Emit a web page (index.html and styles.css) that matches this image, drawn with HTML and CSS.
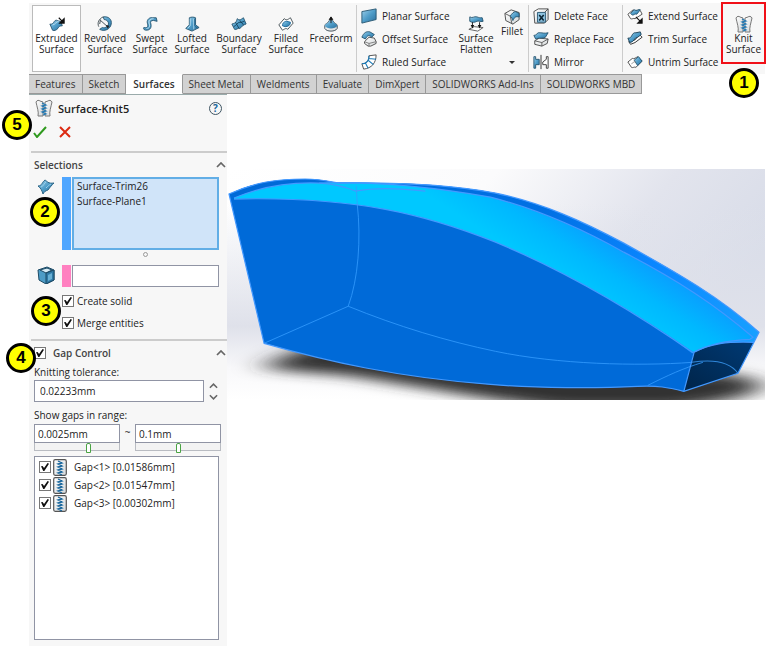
FILE: index.html
```html
<!DOCTYPE html>
<html lang="en">
<head>
<meta charset="utf-8">
<title>Surface-Knit5</title>
<link rel="stylesheet" href="styles.css">
</head>
<body>
<svg class="sprite" aria-hidden="true">
  <defs>
    <linearGradient id="steel" x1="0" y1="0" x2="1" y2="1"><stop offset="0" stop-color="#9fd0ea"/><stop offset=".5" stop-color="#4e9cc8"/><stop offset="1" stop-color="#2c6f9c"/></linearGradient>
    <linearGradient id="pale" x1="0" y1="0" x2="1" y2="1"><stop offset="0" stop-color="#ffffff"/><stop offset="1" stop-color="#d4d8da"/></linearGradient>
  </defs>
  <symbol id="extrude" viewBox="0 0 18 18"><path d="M1 9c3 1 4-2 6-4 2-1 3 1 6 1l2 5c-3 0-4 1-5 3-2 2-4 3-6 2z" fill="url(#steel)" stroke="#24536f"/><path d="M4 10c3 0 4-4 7-4" stroke="#bfe2f2" fill="none"/><path d="M11 2l4 4M17 3v5h-5z" stroke="#111" stroke-width="1.3" fill="#111"/></symbol>
  <symbol id="revolve" viewBox="0 0 18 18"><path d="M7 1c6-1 10 3 9 8-1 6-8 9-13 6l3-2c3 1 6-1 7-4 0-3-2-5-5-5z" fill="url(#steel)" stroke="#24536f"/><path d="M7 1C2 3 0 8 2 12M4 5l9 8M3 9l1-5" fill="none" stroke="#49545a" stroke-width="1.1"/><path d="M12 14l-2-4 4 1z" fill="#222"/></symbol>
  <symbol id="sweep" viewBox="0 0 18 18"><path d="M2 13c5 1 5-2 4-5C5 4 9 1 12 2h4l1 4-4-1c-3 0-4 1-3 4 1 4-1 7-5 7-2 0-4-1-3-3z" fill="url(#steel)" stroke="#24536f"/><path d="M5 14c4 0 4-3 3-6s2-5 5-5" fill="none" stroke="#c5e5f4"/></symbol>
  <symbol id="loft" viewBox="0 0 18 18"><path d="M6 2c2-1 5-1 7 0v8l4 3-8 4-7-3 4-4z" fill="url(#steel)" stroke="#24536f"/><path d="M7 3v8l-3 3M11 3v12" stroke="#b7ddef" fill="none"/><path d="M12 3v8l3 3" stroke="#23658d" fill="none"/></symbol>
  <symbol id="boundary" viewBox="0 0 18 18"><path d="M1 9c3-1 5-1 6-6 3 3 5 0 7-1l3 7c-3 1-4 2-7 5-2-1-4 2-6 1z" fill="url(#steel)" stroke="#24536f"/><path d="M5 7l4 7M10 5l4 5M3 12c3-1 4-5 7-5 2 1 3-1 5-1" stroke="#123f59" fill="none"/></symbol>
  <symbol id="filled" viewBox="0 0 18 18"><path d="M1 10l6-7c3 3 5 0 7-1l3 6-6 7c-2-2-4 0-6 1z" fill="#fff" stroke="#39454b"/><path d="M5 11c0-4 3-5 5-5l4 1c0 3-2 5-6 5z" fill="url(#steel)" stroke="#17669a"/></symbol>
  <symbol id="freeform" viewBox="0 0 18 18"><path d="M2 11c0-3 4-2 5-6h4c1 4 5 3 5 6v3c-2 4-12 4-14 0z" fill="url(#pale)" stroke="#38474f"/><path d="M2 11c0-3 4-2 5-6h4c1 4 5 3 5 6-2 4-12 4-14 0z" fill="url(#steel)"/><path d="M9 8V2M7 4l2-3 2 3z" fill="#111" stroke="#111"/></symbol>
  <symbol id="planar" viewBox="0 0 18 18"><path d="M1 4l16-3v12L1 17z" fill="url(#steel)" stroke="#24536f"/></symbol>
  <symbol id="offset" viewBox="0 0 18 18"><path d="M4 12l5-5 6 1 2 4v2l-6 3H8l-4-3z" fill="url(#pale)" stroke="#444"/><path d="M4 12l5 2 8-2M9 14v3" fill="none" stroke="#777"/><path d="M1 7c2-5 5-7 9-6l5 3-3 3C9 4 7 5 5 9z" fill="url(#steel)" stroke="#24536f"/></symbol>
  <symbol id="ruled" viewBox="0 0 18 18"><path d="M1 11c5 0 8-3 8-9l8-1c0 9-5 15-14 16z" fill="#fff" stroke="#444"/><path d="M1 11c5 0 8-3 8-9M5 10l3 6M8 7l6 5M9 5l8 1" stroke="#1b7ab7" fill="none" stroke-width="1.2"/></symbol>
  <symbol id="flatten" viewBox="0 0 18 18"><path d="M1 15l6-3 10 1-6 4z" fill="#fff" stroke="#555"/><path d="M2 1c3 2 5-1 8 0s3 1 6 1l1 4c-4 1-5-1-7 0s-5 2-8 0z" fill="url(#steel)" stroke="#24536f"/><path d="M5 7v5M13 7v5" stroke="#111"/><path d="M3 10h4l-2 4zM11 10h4l-2 4z" fill="#111"/></symbol>
  <symbol id="fillet" viewBox="0 0 18 18"><path d="M1 5l7-4 9 3v8l-7 5-8-4z" fill="url(#pale)" stroke="#444"/><path d="M1 5l6 3 2 9" fill="none" stroke="#555"/><path d="M7 8c2-3 4-5 6-5l4 2v4c-4-1-5 0-7 4-1-2-1-4-3-5z" fill="url(#steel)" stroke="#24536f"/></symbol>
  <symbol id="delete" viewBox="0 0 18 18"><path d="M1 4l5-3h11v12l-4 4H2z" fill="url(#pale)" stroke="#444"/><path d="M13 5l4-4" stroke="#444"/><path d="M5 5h9v11H5z" fill="#8fc4e1" stroke="#24536f"/><path d="M7 8l5 6M12 8l-5 6" stroke="#0c2534" stroke-width="1.8"/></symbol>
  <symbol id="replace" viewBox="0 0 18 18"><path d="M2 11l5-3 10 1-1 5-6 3-8-2z" fill="url(#pale)" stroke="#444"/><path d="M2 11l8 2 7-4M10 13v4" fill="none" stroke="#555"/><path d="M1 5c4 0 3-4 7-3 3 0 5 1 9 0l-3 5c-3 2-6 0-11 2z" fill="url(#steel)" stroke="#24536f"/></symbol>
  <symbol id="mirror" viewBox="0 0 18 18"><path d="M1 3h2v3h4v6H3v4H1z" fill="url(#steel)" stroke="#24536f"/><path d="M9 1v16" stroke="#222"/><path d="M17 3h-2v3l-4 3v3h4v4h2z" fill="#fff" stroke="#333"/></symbol>
  <symbol id="extend" viewBox="0 0 18 18"><path d="M1 7l6-5c3 3 5-1 8 1l2 4-8 5c-2-1-3 1-5 0z" fill="#fff" stroke="#444"/><path d="M4 6l4-4c3 2 5-1 7 0l-4 5c-2-1-3 1-5 1z" fill="url(#steel)" stroke="#24536f"/><path d="M10 10l5 5M17 12v5h-5z" fill="#111" stroke="#111" stroke-width="1.2"/></symbol>
  <symbol id="trim" viewBox="0 0 18 18"><path d="M2 12l2 3 5-2 8-6-3-3-5 6z" fill="#fff" stroke="#222"/><path d="M1 8c5 1 4-7 9-6l5-1 1 3-4 3c-4 0-4 6-9 6z" fill="url(#steel)" stroke="#183d54"/></symbol>
  <symbol id="untrim" viewBox="0 0 18 18"><path d="M1 9l5-4c2 1 4-1 6-2l5 5-7 7c-2-1-3 1-5 0z" fill="#fff" stroke="#444"/><path d="M8 7l5-4 4 5-5 5z" fill="url(#steel)" stroke="#24536f"/><path d="M5 11c2-1 3-3 5-2" fill="none" stroke="#888"/></symbol>
  <symbol id="knit" viewBox="0 0 18 18"><path d="M1 3c1-2 3-2 4-1l3 1v14H3c1-4-1-9-2-14z" fill="url(#pale)" stroke="#777"/><path d="M17 3c-1-2-3-2-4-1l-3 1v14h5c-1-4 1-9 2-14z" fill="url(#pale)" stroke="#777"/><path d="M7 4l4 2-4 1 4 2-4 1 4 2-4 1 4 2-3 1" fill="none" stroke="#2177b2" stroke-width="1.2"/></symbol>
  <symbol id="gap" viewBox="0 0 14 17"><rect x=".7" y=".7" width="12.6" height="15.6" rx="1.5" fill="url(#pale)" stroke="#555" stroke-width="1.2"/><path d="M5 2l4 2-4 1 4 2-4 1 4 2-4 1 4 2-4 1 4 2" fill="none" stroke="#17659c" stroke-width="1.3"/></symbol>
  <symbol id="surf" viewBox="0 0 18 16"><path d="M1 7c4 0 4-4 7-6 2 1 3 4 9 3-2 2-4 4-6 7-3 1-4 2-5 4-1-3-2-6-5-8z" fill="url(#steel)" stroke="#2d6687"/><path d="M4 8c3-1 3-4 5-5M9 9c2-2 3-3 5-4" fill="none" stroke="#9bd0ea"/></symbol>
  <symbol id="cube" viewBox="0 0 18 18"><path d="M1 4l9-3 7 3v10l-8 4-7-4z" fill="#4d9cc6" stroke="#1d4a65"/><path d="M3 4l7-2 5 2-6 3z" fill="#d7edf7" stroke="#1d4a65"/><path d="M9 7l8-3v10l-8 4z" fill="#2f7aa6" stroke="#1d4a65"/><path d="M11 9l4-2v6l-4 2z" fill="#69b1d5"/></symbol>
  <symbol id="caret" viewBox="0 0 10 6"><path d="M1 5l4-4 4 4" fill="none" stroke="#666" stroke-width="1.7"/></symbol>
</svg>

<main class="app">
  <header class="ribbon">
    <div class="tools">
      <button class="tool w-49 current"><svg><use href="#extrude"/></svg>Extruded<br>Surface</button>
      <button class="tool w-48"><svg><use href="#revolve"/></svg>Revolved<br>Surface</button>
      <button class="tool w-42"><svg><use href="#sweep"/></svg>Swept<br>Surface</button>
      <button class="tool w-42"><svg><use href="#loft"/></svg>Lofted<br>Surface</button>
      <button class="tool w-52"><svg><use href="#boundary"/></svg>Boundary<br>Surface</button>
      <button class="tool w-42"><svg><use href="#filled"/></svg>Filled<br>Surface</button>
      <button class="tool w-48"><svg><use href="#freeform"/></svg>Freeform</button>
    </div>
    <div class="group">
      <div class="stack w-94">
        <button class="row-tool"><svg><use href="#planar"/></svg>Planar Surface</button>
        <button class="row-tool"><svg><use href="#offset"/></svg>Offset Surface</button>
        <button class="row-tool"><svg><use href="#ruled"/></svg>Ruled Surface</button>
      </div>
      <button class="tool w-42"><svg><use href="#flatten"/></svg>Surface<br>Flatten</button>
      <button class="tool short w-30"><svg><use href="#fillet"/></svg>Fillet<span class="drop"></span></button>
    </div>
    <div class="group">
      <div class="stack w-88">
        <button class="row-tool"><svg><use href="#delete"/></svg>Delete Face</button>
        <button class="row-tool"><svg><use href="#replace"/></svg>Replace Face</button>
        <button class="row-tool"><svg><use href="#mirror"/></svg>Mirror</button>
      </div>
    </div>
    <div class="group">
      <div class="stack w-94">
        <button class="row-tool"><svg><use href="#extend"/></svg>Extend Surface</button>
        <button class="row-tool"><svg><use href="#trim"/></svg>Trim Surface</button>
        <button class="row-tool"><svg><use href="#untrim"/></svg>Untrim Surface</button>
      </div>
    </div>
    <div class="knit-slot">
      <button class="tool knit"><svg><use href="#knit"/></svg>Knit<br>Surface</button>
      <span class="badge b1">1</span>
    </div>
  </header>

  <nav class="tabs">
    <a href="#">Features</a><a href="#">Sketch</a><a href="#" class="active">Surfaces</a><a href="#">Sheet Metal</a><a href="#">Weldments</a><a href="#">Evaluate</a><a href="#">DimXpert</a><a href="#">SOLIDWORKS Add-Ins</a><a href="#">SOLIDWORKS MBD</a>
  </nav>

  <div class="workspace">
    <aside class="panel">
      <div class="title">
        <svg class="title-icon"><use href="#knit"/></svg>
        <h1>Surface-Knit5</h1>
        <button class="help" aria-label="Help">?</button>
      </div>
      <div class="confirm">
        <button aria-label="OK"><svg viewBox="0 0 14 12"><path d="M1 7l3 4 9-10" fill="none" stroke="#2f9a1e" stroke-width="2"/></svg></button>
        <button aria-label="Cancel"><svg viewBox="0 0 14 12"><path d="M2 1l10 10M12 1L2 11" fill="none" stroke="#dc2a12" stroke-width="2"/></svg></button>
        <span class="badge b5">5</span>
      </div>

      <section class="selections">
        <div class="head"><h2>Selections</h2><svg class="caret"><use href="#caret"/></svg></div>
        <div class="pick">
          <svg class="pick-icon"><use href="#surf"/></svg>
          <span class="bar blue"></span>
          <ul class="picked"><li>Surface-Trim26</li><li>Surface-Plane1</li></ul>
          <span class="badge b2">2</span>
        </div>
        <div class="grip"><i></i></div>
        <div class="pick">
          <svg class="pick-icon"><use href="#cube"/></svg>
          <span class="bar pink"></span>
          <input class="faces" type="text" aria-label="Seed faces">
        </div>
        <div class="options">
          <label><input type="checkbox" checked>Create solid</label>
          <label><input type="checkbox" checked>Merge entities</label>
          <span class="badge b3">3</span>
        </div>
      </section>

      <section class="gaps">
        <div class="head"><label class="gap-label"><input type="checkbox" checked>Gap Control</label><svg class="caret"><use href="#caret"/></svg><span class="badge b4">4</span></div>
        <label class="caption" for="tol">Knitting tolerance:</label>
        <div class="tolerance">
          <input id="tol" type="text" value="0.02233mm">
          <div class="spin"><button aria-label="Increase"><svg><use href="#caret"/></svg></button><button class="down" aria-label="Decrease"><svg><use href="#caret"/></svg></button></div>
        </div>
        <label class="caption" for="low">Show gaps in range:</label>
        <div class="range">
          <div><input id="low" type="text" value="0.0025mm"><input type="range" min="0" max="100" value="64" aria-label="Smallest gap"></div>
          <span>~</span>
          <div><input type="text" value="0.1mm" aria-label="Largest gap"><input type="range" min="0" max="100" value="50" aria-label="Largest gap slider"></div>
        </div>
        <div class="gap-list">
          <label><input type="checkbox" checked><svg><use href="#gap"/></svg>Gap&lt;1&gt; [0.01586mm]</label>
          <label><input type="checkbox" checked><svg><use href="#gap"/></svg>Gap&lt;2&gt; [0.01547mm]</label>
          <label><input type="checkbox" checked><svg><use href="#gap"/></svg>Gap&lt;3&gt; [0.00302mm]</label>
        </div>
      </section>
    </aside>

    <div class="viewport">
      <svg viewBox="0 0 537 231" role="img" aria-label="Knitted hull surface">
        <defs>
          <linearGradient id="sky" x1="0" y1="0" x2="1" y2=".35"><stop offset="0" stop-color="#fff"/><stop offset=".45" stop-color="#fbfbfc"/><stop offset=".75" stop-color="#e2e4ed"/><stop offset="1" stop-color="#d8dce8"/></linearGradient>
          <linearGradient id="floor" x1="0" y1="0" x2="0" y2="1"><stop offset=".15" stop-color="#dfe2eb" stop-opacity="0"/><stop offset=".68" stop-color="#dfe1ea"/><stop offset=".86" stop-color="#f8f8fa"/><stop offset="1" stop-color="#fff"/></linearGradient>
          <linearGradient id="deck" gradientUnits="userSpaceOnUse" x1="300" y1="90" x2="335" y2="35"><stop offset="0" stop-color="#00c8ff"/><stop offset=".5" stop-color="#00b8ff"/><stop offset="1" stop-color="#0a9cff"/></linearGradient>
          <linearGradient id="rim" x1="0" y1="0" x2="1" y2="0"><stop offset="0" stop-color="#0069d6"/><stop offset=".6" stop-color="#0070e4"/><stop offset=".8" stop-color="#0a86ff"/><stop offset="1" stop-color="#18a0ff"/></linearGradient>
          <linearGradient id="transom" x1="0" y1="1" x2="1" y2="0"><stop offset="0" stop-color="#002448"/><stop offset="1" stop-color="#003a75"/></linearGradient>
          <filter id="soft" x="-20%" y="-50%" width="140%" height="200%"><feGaussianBlur stdDeviation="16 6"/></filter>
        </defs>
        <rect width="537" height="231" fill="url(#sky)"/>
        <rect width="537" height="231" fill="url(#floor)"/>
        <path d="M36 198C60 184 90 170 150 172L440 208C480 202 510 203 530 212 540 224 510 230 450 238H330C270 232 180 215 120 206 80 203 55 202 36 198z" fill="#303030" filter="url(#soft)"/>
        <path d="M2 25C28 13 50 10 78 10 92 10 100 12 111 14 170 13 220 15 268 24 315 34 355 52 396 74 450 104 492 128 531 163L526 173 510 204 456 222C440 218 430 216 410 217 370 219 310 219 263 215 170 208 100 192 37 174z" fill="#006ad8"/>
        <path d="M2 25C28 13 50 10 78 10 92 10 100 12 111 14 170 13 220 15 268 24 315 34 355 52 396 74 450 104 492 128 531 163L526 173 464 184 300 60 100 25z" fill="url(#rim)"/>
        <path d="M7 29C35 17 65 13 92 14 140 12 200 17 263 28 310 40 355 60 396 83 450 111 488 136 525 168L522 170C500 171 482 174 466 183 400 138 335 101 268 73 200 46 130 27 7 30z" fill="url(#deck)"/>
        <path d="M466 183C482 174 500 172 526 173L510 204 456 222z" fill="url(#transom)"/>
        <path d="M129 17L130 35C134 70 131 110 121 137L37 174M121 137C170 157 220 172 268 182 330 195 410 197 464 193M420 216C440 206 455 199 475 193" fill="none" stroke="#349cff" stroke-width=".8"/>
        <path d="M464 193C490 189 503 194 510 204" fill="none" stroke="#2f86d8"/>
        <g fill="none" stroke="#4399ff" stroke-width="1.2">
          <path d="M2 25C28 13 50 10 78 10 92 10 100 12 111 14 170 13 220 15 268 24 315 34 355 52 396 74 450 104 492 128 531 163L526 173 510 204 456 222C440 218 430 216 410 217 370 219 310 219 263 215 170 208 100 192 37 174z"/>
          <path d="M7 29C35 17 65 13 92 14 140 12 200 17 263 28 310 40 355 60 396 83 450 111 488 136 525 168L522 170C500 171 482 174 466 183"/>
          <path d="M7 30C130 27 200 46 268 73 335 101 400 138 466 184L456 222M466 183C482 174 500 172 526 173M92 14Q112 15 128 22 155 17 198 22"/>
        </g>
      </svg>
    </div>
  </div>
</main>
</body>
</html>
```

FILE: styles.css
```css
* { box-sizing: border-box; }

body {
  margin: 0;
  background: #fff;
  color: #222;
  font: 10px/11px "Open Sans", "Noto Sans", sans-serif;
}

button, input { font: inherit; color: inherit; }
button { border: 0; padding: 0; background: none; }
svg { display: block; flex: none; }
h1, h2, ul { margin: 0; padding: 0; list-style: none; }
.sprite { position: absolute; width: 0; height: 0; }

.app { padding: 3px 2px 3px 29px; }

/* ribbon */
.ribbon {
  display: flex;
  height: 71px;
  padding: 2px 0;
  background: #f7f7f7;
}
.tools { display: flex; padding-left: 3px; }
.tool {
  display: flex;
  flex-direction: column;
  align-items: center;
  padding-top: 11px;
  text-align: center;
  white-space: nowrap;
}
.tool svg { width: 16px; height: 16px; margin-bottom: 1px; }
.tool.current { border: 1px solid #bbb; background: #fff; padding-top: 10px; }
.tool.short { padding-top: 4px; }
.drop {
  margin-top: 24px;
  border: 3px solid transparent;
  border-top-color: #333;
  border-bottom: 0;
}
.w-30 { width: 30px; }
.w-42 { width: 42px; }
.w-48 { width: 48px; }
.w-49 { width: 49px; }
.w-52 { width: 52px; }
.w-88 { width: 88px; }
.w-94 { width: 94px; }
.group {
  display: flex;
  margin-left: 1px;
  padding-left: 4px;
  border-left: 1px solid #ccc;
}
.stack { display: flex; flex-direction: column; padding-top: 3px; gap: 7px; }
.row-tool { display: flex; align-items: center; gap: 5px; white-space: nowrap; }
.row-tool svg { width: 16px; height: 16px; }
.knit-slot { position: relative; margin: -3px 0 0 auto; }
.knit { width: 45px; height: 62px; padding-top: 11px; border: 2px solid #f01018; }
.knit svg { width: 18px; height: 18px; margin-bottom: 0; }

/* numbered callouts */
.badge {
  position: absolute;
  display: grid;
  place-items: center;
  width: 30px;
  height: 30px;
  border: 3px solid #000;
  border-radius: 50%;
  background: #ff0;
  color: #000;
  font: bold 17px/20px "Liberation Sans", sans-serif;
}
.b1 { left: 8px; top: 66px; }
.b2 { left: -4px; top: 20px; }
.b3 { left: -3px; top: 9px; }
.b4 { left: -28px; top: 2px; }
.b5 { left: -27px; top: -11px; }

/* tabs */
.tabs { display: flex; height: 20px; }
.tabs a {
  padding: 0 6px;
  border: 1px solid #999;
  border-left: 0;
  background: #d2d2d2;
  color: #333;
  line-height: 18px;
  text-decoration: none;
  white-space: nowrap;
}
.tabs .active { padding: 0 7px; border-color: transparent #999 transparent transparent; background: #fff; font-weight: 600; }

/* workspace */
.workspace { display: flex; align-items: flex-start; }
.panel {
  flex: 0 0 198px;
  min-width: 0;
  padding-bottom: 6px;
  background: #f7f7f7;
  border-top: 1px solid #9aabab;
}
.title { display: flex; align-items: center; height: 26px; padding: 0 5px 0 6px; gap: 5px; }
.title-icon { width: 18px; height: 18px; }
.title h1 { flex: 1; font-size: 11px; font-weight: 600; }
.help {
  width: 13px;
  height: 13px;
  border: 1px solid #3f5563;
  border-radius: 50%;
  color: #17669a;
  font-weight: 700;
}
.confirm { position: relative; display: flex; align-items: flex-start; gap: 11px; height: 30px; padding: 5px 4px; }
.confirm svg { width: 14px; height: 12px; }
section { margin-left: 2px; border-top: 2px solid #ccc; padding: 0 8px 0 3px; }
.head { position: relative; display: flex; align-items: center; justify-content: space-between; height: 24px; margin-right: -7px; }
.head h2, .gap-label { font-size: 10px; font-weight: 600; color: #444; }
.caret { width: 10px; height: 6px; }
.pick { position: relative; display: flex; }
.pick-icon { width: 18px; height: 18px; margin: 1px 7px 0 3px; }
.bar { width: 9px; margin-right: 1px; }
.blue { background: #4fa6ff; }
.pink { background: #ff80c0; }
.picked { flex: 1; height: 73px; padding: 0 3px; border: 2px solid #62aee6; background: #d0e4f9; line-height: 15px; }
.grip { display: grid; place-items: center; height: 9px; margin: 0 -3px 6px 34px; }
.grip i { width: 5px; height: 5px; border: 1px solid #999; border-radius: 50%; }
.faces { flex: 1; min-width: 0; height: 22px; }
.options { position: relative; display: grid; gap: 10px; padding: 8px 0 10px 28px; }
label { display: flex; align-items: center; }
.options label { gap: 3px; height: 12px; }

input[type="checkbox"] {
  appearance: none;
  flex: none;
  width: 12px;
  height: 12px;
  margin: 0;
  border: 1px solid #777;
  background: #fff;
}
input[type="checkbox"]:checked::before {
  content: "";
  display: block;
  width: 8px;
  height: 8px;
  margin: 1px;
  background: #111;
  clip-path: polygon(0 42%, 20% 36%, 38% 64%, 82% 0, 100% 10%, 42% 100%, 28% 100%);
}

.gap-label { gap: 7px; }
.caption { height: 14px; }
.tolerance { display: flex; gap: 4px; margin: 1px 0 6px; }
input[type="text"] { border: 1px solid #9094a4; border-radius: 0; background: #fff; padding: 0 3px; outline: 0; }
.tolerance input[type="text"] { flex: 1; min-width: 0; height: 22px; padding: 0 5px; }
.spin { display: grid; width: 11px; place-items: center; }
.spin svg { width: 9px; height: 6px; }
.down { transform: rotate(180deg); }
.range { display: flex; justify-content: space-between; margin: 2px -2px 5px 0; }
.range div { width: 86px; }
.range input { display: block; width: 100%; }
.range input[type="text"] { height: 19px; }
.range span { line-height: 16px; }
input[type="range"] {
  appearance: none;
  height: 8px;
  margin: 0;
  border: 1px solid #b9bcc2;
  border-top: 0;
  background: #f3f3f3;
}
input[type="range"]::-webkit-slider-thumb {
  appearance: none;
  width: 5px;
  height: 10px;
  margin-top: 2px;
  border: 1px solid #4aa344;
  border-radius: 2px 2px 0 0;
  background: #fff;
}
.gap-list { height: 184px; padding: 1px 4px; border: 1px solid #9094a4; background: #fff; }
.gap-list label { height: 18px; }
.gap-list svg { width: 14px; height: 17px; margin: 0 7px 0 2px; }

.viewport { flex: 1; min-width: 0; margin-top: 75px; }
.viewport svg { width: 100%; height: auto; }
```
